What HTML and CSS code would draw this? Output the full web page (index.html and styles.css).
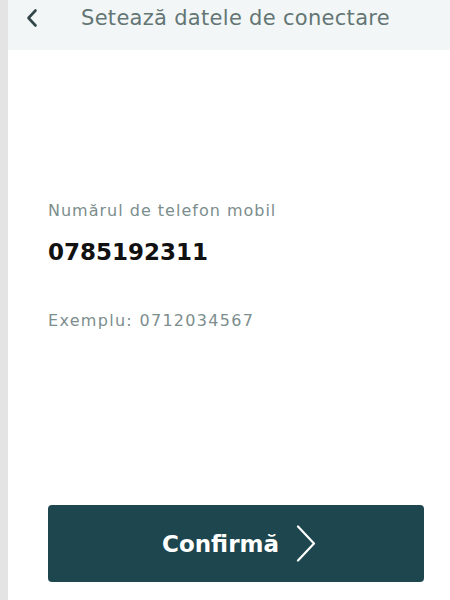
FILE: index.html
```html
<!DOCTYPE html>
<html lang="ro">

<head>
    <meta charset="UTF-8">
    <meta name="viewport" content="width=device-width, initial-scale=1.0">
    <title>Setează datele de conectare</title>
    <link rel="stylesheet" href="styles.css">
</head>

<body>
    <div class="page">
        <div class="header">
            <div class="back">
                <svg width="14" height="20" viewBox="0 0 14 20">
                    <path d="M10.5 2.5 L3.5 10 L10.5 17.5" fill="none" stroke="#33474a" stroke-width="2.6" stroke-linecap="round" stroke-linejoin="round" />
                </svg>
            </div>
            <div class="title">Setează datele de conectare</div>
        </div>

        <div class="content">
            <div class="field">
                <div class="label">Numărul de telefon mobil</div>
                <div class="value">0785192311</div>
                <div class="hint">Exemplu: 0712034567</div>
            </div>

            <div class="btn">
                <span>Confirmă</span>
                <svg width="20" height="37" viewBox="0 0 20 37">
                    <path d="M2 1.5 L18 18.5 L2 35.5" fill="none" stroke="#fff" stroke-width="2.2" stroke-linecap="round" stroke-linejoin="round" />
                </svg>
            </div>
        </div>
    </div>
</body>

</html>
```

FILE: styles.css
```css
* {
    padding: 0;
    margin: 0;
    box-sizing: border-box;
}

body {
    width: 450px;
    height: 600px;
    background-color: #e4e4e4;
    font-family: "DejaVu Sans", "Liberation Sans", sans-serif;
    overflow: hidden;
}

.page {
    margin-left: 8px;
    height: 600px;
    background-color: #fff;
    display: flex;
    flex-direction: column;
}

.header {
    height: 50px;
    background-color: #f3f6f6;
    display: flex;
    align-items: center;
    padding-bottom: 15px;
    padding-left: 17px;
}

.back {
    width: 56px;
    display: flex;
    align-items: center;
}

.title {
    font-size: 21px;
    color: #637675;
    letter-spacing: 0.3px;
}

.content {
    flex: 1;
    display: flex;
    flex-direction: column;
    padding: 151px 26px 18px 40px;
}

.field {
    flex: 1;
}

.label {
    font-size: 16px;
    color: #7c8e8d;
    letter-spacing: 1px;
}

.value {
    margin-top: 19px;
    font-size: 23px;
    font-weight: 700;
    color: #111;
}

.hint {
    margin-top: 46px;
    font-size: 16px;
    color: #7c8e8d;
    letter-spacing: 1.3px;
}

.btn {
    height: 77px;
    background-color: #1d464e;
    border-radius: 4px;
    display: flex;
    justify-content: center;
    align-items: center;
    gap: 17px;
    padding-left: 6px;
    color: #fff;
    font-size: 23px;
    font-weight: 700;
    cursor: pointer;
}
```
